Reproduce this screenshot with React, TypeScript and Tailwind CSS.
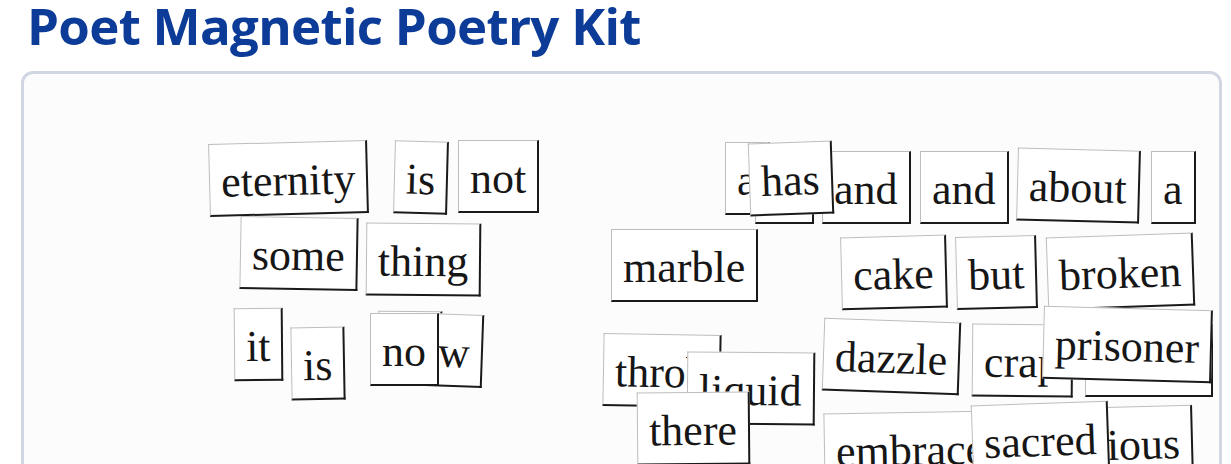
const TILES: { word: string; x: number; y: number; rot: string }[] = [
  { word: "eternity", x: 209, y: 142, rot: "rotate-[-1.5deg]" },
  { word: "is", x: 394, y: 141, rot: "rotate-[1.5deg]" },
  { word: "not", x: 458, y: 140, rot: "rotate-0" },
  { word: "some", x: 240, y: 217, rot: "rotate-[1deg]" },
  { word: "thing", x: 366, y: 223, rot: "rotate-[0.5deg]" },
  { word: "it", x: 234, y: 308, rot: "rotate-[-0.5deg]" },
  { word: "is", x: 291, y: 327, rot: "rotate-[-1deg]" },
  { word: "so", x: 378, y: 311, rot: "rotate-[0.5deg]" },
  { word: "w", x: 426, y: 314, rot: "rotate-[2deg]" },
  { word: "no", x: 370, y: 313, rot: "rotate-0" },
  { word: "a", x: 725, y: 142, rot: "rotate-0" },
  { word: "to", x: 755, y: 151, rot: "rotate-0" },
  { word: "and", x: 822, y: 151, rot: "rotate-0" },
  { word: "has", x: 749, y: 142, rot: "rotate-[-2deg]" },
  { word: "and", x: 920, y: 151, rot: "rotate-0" },
  { word: "about", x: 1017, y: 149, rot: "rotate-[1.5deg]" },
  { word: "a", x: 1151, y: 151, rot: "rotate-0" },
  { word: "marble", x: 611, y: 229, rot: "rotate-0" },
  { word: "cake", x: 841, y: 236, rot: "rotate-[-1.5deg]" },
  { word: "but", x: 956, y: 236, rot: "rotate-[-1.5deg]" },
  { word: "broken", x: 1047, y: 235, rot: "rotate-[-2deg]" },
  { word: "throb", x: 603, y: 334, rot: "rotate-[1deg]" },
  { word: "liquid", x: 687, y: 352, rot: "rotate-[0.5deg]" },
  { word: "there", x: 637, y: 392, rot: "rotate-[-0.5deg]" },
  { word: "dazzle", x: 823, y: 320, rot: "rotate-[2deg]" },
  { word: "crap", x: 972, y: 324, rot: "rotate-[0.5deg]" },
  { word: "ocean", x: 1085, y: 324, rot: "rotate-0" },
  { word: "prisoner", x: 1043, y: 308, rot: "rotate-[1.5deg]" },
  { word: "embrace", x: 824, y: 412, rot: "rotate-[-1deg]" },
  { word: "precious", x: 1019, y: 407, rot: "rotate-[-1.5deg]" },
  { word: "sacred", x: 972, y: 403, rot: "rotate-[-2deg]" },
];

// panel inner origin in page coordinates (outer edge + 3px border)
const ORIGIN_X = 24;
const ORIGIN_Y = 74;

function Tile({ word, x, y, rot }: { word: string; x: number; y: number; rot: string }) {
  return (
    <div
      className={`absolute bg-white px-[11px] pt-[16px] pb-[10px] border-t border-l border-[#bdbdbd] border-r-2 border-b-2 border-r-[#1a1a1a] border-b-[#1a1a1a] ${rot}`}
      style={{ left: x - ORIGIN_X, top: y - ORIGIN_Y }}
    >
      <span className="block whitespace-nowrap text-[44px] leading-[44px] text-[#161616] font-['Liberation_Serif','Times_New_Roman',serif]">
        {word}
      </span>
    </div>
  );
}

export default function App() {
  return (
    <div className="h-[464px] overflow-hidden bg-white">
      <h1 className="-mt-[1px] pl-[27px] text-[51px] leading-[52px] font-bold tracking-[-0.7px] text-[#0c3c98] font-['Open_Sans','Noto_Sans',sans-serif]">
        Poet Magnetic Poetry Kit
      </h1>

      <div className="relative mt-[20px] ml-[21px] w-[1201px] h-[440px] rounded-[12px] border-[3px] border-[#d0d7e2] bg-[#fcfcfd] overflow-hidden">
        {TILES.map((t, i) => (
          <Tile key={i} {...t} />
        ))}
      </div>
    </div>
  );
}
